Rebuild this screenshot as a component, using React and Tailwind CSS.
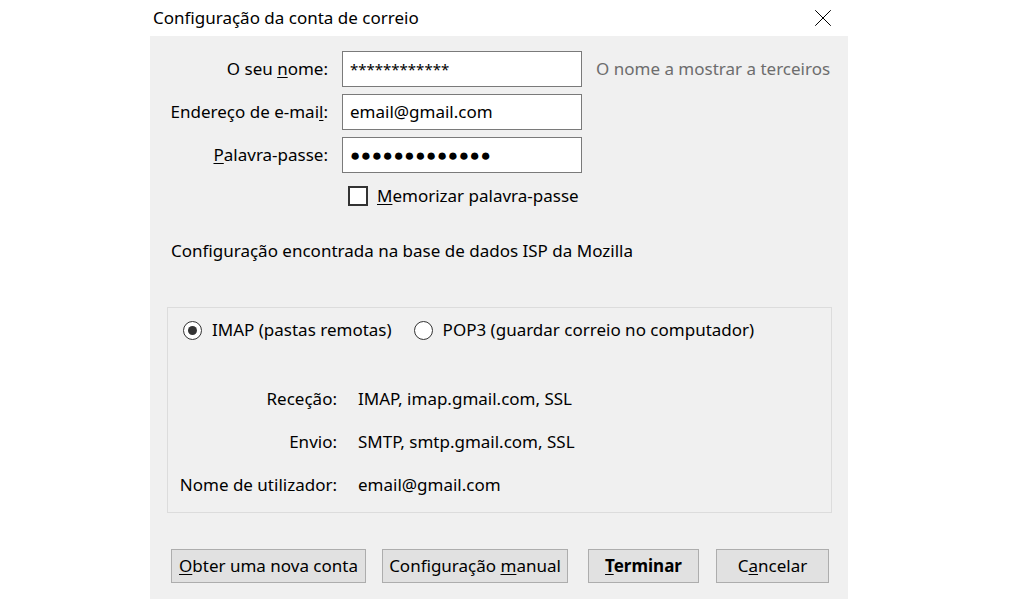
import { X } from 'lucide-react';

const FONT = { fontFamily: '"Noto Sans", "Open Sans", sans-serif' };

function Field({ label, value, hint }) {
  return (
    <>
      <div className="flex h-[36px] items-center justify-end whitespace-nowrap">{label}</div>
      <div className="flex h-[36px] w-[240px] items-center border border-[#7a7a7a] bg-white px-[7px] text-black">
        {value}
      </div>
      <div className="flex h-[36px] items-center whitespace-nowrap text-[#6d6d6d]">{hint}</div>
    </>
  );
}

function Radio({ checked, children }) {
  return (
    <label className="flex items-center gap-[10px] whitespace-nowrap">
      <span className="flex h-[19px] w-[19px] items-center justify-center rounded-full border-[1.5px] border-[#333] bg-white">
        {checked && <span className="h-[9px] w-[9px] rounded-full bg-[#333]" />}
      </span>
      <span>{children}</span>
    </label>
  );
}

function InfoRow({ label, value }) {
  return (
    <>
      <div className="flex justify-end whitespace-nowrap">{label}</div>
      <div className="whitespace-nowrap">{value}</div>
    </>
  );
}

function Button({ className, children }) {
  return (
    <button
      type="button"
      className={`flex h-[34px] items-center justify-center whitespace-nowrap border border-[#adadad] bg-[#e1e1e1] text-[17px] leading-[22px] text-black ${className}`}
    >
      {children}
    </button>
  );
}

export default function App() {
  return (
    <div className="h-[599px] w-[1010px] overflow-hidden bg-white text-[17px] leading-[22px]" style={FONT}>
      <div className="ml-[150px] flex w-[698px] flex-col">
        <div className="flex h-[36px] items-center justify-between pl-[3px] pr-[10px]">
          <span className="text-black">Configuração da conta de correio</span>
          <X size={30} strokeWidth={0.8} className="text-black" />
        </div>

        <div className="flex h-[563px] flex-col bg-[#f0f0f0] pl-[21px] text-black">
          <div className="mt-[15px] grid grid-cols-[157px_240px_auto] gap-x-[14px] gap-y-[7px]">
            <Field
              label={<span>O seu <u className="underline-offset-2">n</u>ome:</span>}
              value={<span className="text-[15px]">************</span>}
              hint="O nome a mostrar a terceiros"
            />
            <Field label={<span>Endereço de e-mai<u className="underline-offset-2">l</u>:</span>} value="email@gmail.com" />
            <Field
              label={<span><u className="underline-offset-2">P</u>alavra-passe:</span>}
              value={<span className="text-[17px] tracking-[0.6px]">●●●●●●●●●●●●●</span>}
            />
          </div>

          <label className="ml-[177px] mt-[12px] flex items-center gap-[9px]">
            <span className="h-[20px] w-[20px] border-2 border-[#333] bg-white" />
            <span><u className="underline-offset-2">M</u>emorizar palavra-passe</span>
          </label>

          <div className="mt-[33px]">Configuração encontrada na base de dados ISP da Mozilla</div>

          <div className="ml-[-4px] mt-[45px] flex h-[206px] w-[665px] flex-col border border-[#dcdcdc] px-[15px]">
            <div className="mt-[11px] flex gap-[22px]">
              <Radio checked>IMAP (pastas remotas)</Radio>
              <Radio>POP3 (guardar correio no computador)</Radio>
            </div>
            <div className="ml-[-3px] mt-[47px] grid grid-cols-[157px_auto] gap-x-[21px] gap-y-[21px]">
              <InfoRow label="Receção:" value="IMAP, imap.gmail.com, SSL" />
              <InfoRow label="Envio:" value="SMTP, smtp.gmail.com, SSL" />
              <InfoRow label="Nome de utilizador:" value="email@gmail.com" />
            </div>
          </div>

          <div className="mt-[36px] flex">
            <Button className="w-[195px]"><span><u className="underline-offset-2">O</u>bter uma nova conta</span></Button>
            <Button className="ml-[16px] w-[186px]"><span>Configuração <u className="underline-offset-2">m</u>anual</span></Button>
            <Button className="ml-[20px] w-[111px] font-bold"><span><u className="underline-offset-2">T</u>erminar</span></Button>
            <Button className="ml-[17px] w-[113px]"><span>C<u className="underline-offset-2">a</u>ncelar</span></Button>
          </div>
        </div>
      </div>
    </div>
  );
}
